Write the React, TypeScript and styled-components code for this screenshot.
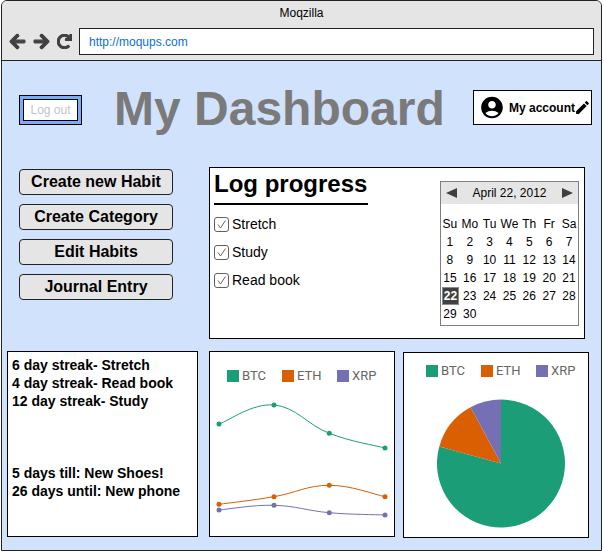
import React from 'react';
import styled, { createGlobalStyle } from 'styled-components';
import { FaArrowLeft, FaArrowRight, FaRedo } from 'react-icons/fa';
import { MdAccountCircle, MdEdit } from 'react-icons/md';

const GlobalStyle = createGlobalStyle`
  html, body {
    margin: 0;
    padding: 0;
    background: #ffffff;
    font-family: "Liberation Sans", Arial, sans-serif;
  }
`;

const BrowserWindow = styled.div`
  box-sizing: border-box;
  width: 601px;
  height: 551px;
  margin-left: 1px;
  border: 1px solid #222222;
  border-radius: 6px 6px 0 0;
  overflow: hidden;
  background: #d1e2fc;
`;

const BrowserHeader = styled.header`
  box-sizing: border-box;
  height: 60px;
  background: #e5e5e5;
  border-bottom: 1px solid #222222;
`;

const WindowTitle = styled.div`
  height: 27px;
  line-height: 24px;
  text-align: center;
  font-size: 12px;
  color: #000000;
`;

const NavRow = styled.div`
  display: flex;
  align-items: center;
  padding: 0 7px 0 7px;
`;

const NavIcons = styled.div`
  display: flex;
  align-items: center;
  width: 70px;
  color: #404040;
  gap: 7px;

  svg {
    stroke: currentColor;
    stroke-width: 36px;
  }
`;

const UrlBar = styled.div`
  box-sizing: border-box;
  flex: 1;
  height: 27px;
  background: #ffffff;
  border: 1px solid #222222;
  padding-left: 9px;
  line-height: 26px;
  font-size: 12px;
  color: #0b6fe0;
`;

const TopRow = styled.div`
  display: flex;
  align-items: flex-start;
  padding: 29px 9px 0 17px;
`;

const LogOutOuter = styled.div`
  box-sizing: border-box;
  width: 63px;
  height: 30px;
  margin-top: 5px;
  padding: 3px;
  background: #7cacf8;
  border: 1px solid #000000;
`;

const LogOutInner = styled.div`
  box-sizing: border-box;
  height: 22px;
  background: #ffffff;
  border: 1px solid #000000;
  text-align: center;
  line-height: 20px;
  font-size: 12px;
  color: #c4c4c4;
`;

const PageTitle = styled.h1`
  flex: 1;
  height: 35px;
  margin: -11px 0 0 32px;
  font-size: 48px;
  line-height: 60px;
  font-weight: bold;
  color: #7a7a7a;
`;

const AccountButton = styled.div`
  box-sizing: border-box;
  display: flex;
  align-items: center;
  width: 119px;
  height: 35px;
  padding-left: 5px;
  background: #ffffff;
  border: 1px solid #000000;
  font-size: 12px;
  font-weight: bold;
  color: #000000;
  white-space: nowrap;
`;

const AccountName = styled.span`
  margin-left: 4px;
  margin-right: -1px;
`;

const MiddleRow = styled.div`
  display: flex;
  align-items: flex-start;
  gap: 36px;
  padding: 42px 0 0 17px;
`;

const ActionColumn = styled.div`
  display: flex;
  flex-direction: column;
  gap: 9px;
  width: 154px;
  margin-top: 2px;
`;

const ActionButton = styled.button`
  box-sizing: border-box;
  height: 26px;
  padding: 0;
  background: #e5e5e5;
  border: 1px solid #222222;
  border-radius: 4px;
  font-family: inherit;
  font-size: 16px;
  font-weight: bold;
  color: #000000;
`;

const LogPanel = styled.section`
  box-sizing: border-box;
  display: flex;
  justify-content: space-between;
  width: 376px;
  height: 172px;
  padding: 0 5px 0 4px;
  background: #ffffff;
  border: 1px solid #000000;
`;

const LogHeading = styled.h2`
  box-sizing: border-box;
  width: 154px;
  height: 37px;
  margin: 0 0 11px;
  border-bottom: 2px solid #000000;
  font-size: 24px;
  line-height: 32px;
  font-weight: bold;
  color: #000000;
  white-space: nowrap;
`;

const HabitRow = styled.label`
  display: flex;
  align-items: center;
  gap: 3px;
  height: 16px;
  margin-bottom: 12px;
  font-size: 14px;
  color: #000000;
`;

const CheckBox = styled.span`
  box-sizing: border-box;
  display: flex;
  align-items: center;
  justify-content: center;
  width: 15px;
  height: 15px;
  background: #ffffff;
  border: 1.5px solid #606060;
  border-radius: 3px;
`;

const Calendar = styled.div`
  box-sizing: border-box;
  width: 139px;
  height: 145px;
  margin-top: 13px;
  background: #ffffff;
  border: 1px solid #7f7f7f;
`;

const CalendarHead = styled.div`
  display: flex;
  align-items: center;
  justify-content: space-between;
  height: 22px;
  padding: 0 5px;
  background: #e5e5e5;
  font-size: 12px;
  color: #000000;
`;

const CalendarArrow = styled.span<{ $dir: 'left' | 'right' }>`
  width: 0;
  height: 0;
  border-top: 5px solid transparent;
  border-bottom: 5px solid transparent;
  ${props => props.$dir === 'left' ? 'border-right: 11px solid #404040;' : 'border-left: 11px solid #404040;'}
`;

const CalendarGrid = styled.div`
  display: grid;
  grid-template-columns: repeat(7, 19.85px);
  grid-auto-rows: 18px;
  padding: 11px 0 0 0;
  margin-left: -1px;
  font-size: 12px;
  color: #000000;
`;

const CalendarCell = styled.div<{ $selected?: boolean }>`
  box-sizing: border-box;
  display: flex;
  align-items: center;
  justify-content: center;
  ${props => props.$selected && `
    background: #404040;
    border: 1px solid #8a8a8a;
    color: #ffffff;
    font-weight: bold;
    margin-left: 2px;
    width: 17px;
  `}
`;

const BottomRow = styled.div`
  display: flex;
  align-items: flex-start;
  padding: 12px 0 0 5px;
`;

const StreakPanel = styled.section`
  box-sizing: border-box;
  width: 191px;
  height: 186px;
  padding: 4px 0 0 4px;
  background: #ffffff;
  border: 1px solid #000000;
`;

const StreakLine = styled.div<{ $gapBefore?: boolean }>`
  height: 18px;
  line-height: 18px;
  font-size: 14px;
  font-weight: bold;
  color: #000000;
  white-space: nowrap;
  ${props => props.$gapBefore && 'margin-top: 54px;'}
`;

const ChartPanel = styled.section<{ $left: number; $top?: number; $legendTop: number }>`
  box-sizing: border-box;
  width: 186px;
  height: 186px;
  margin-left: ${props => props.$left}px;
  margin-top: ${props => props.$top || 0}px;
  padding-top: ${props => props.$legendTop}px;
  background: #ffffff;
  border: 1px solid #000000;
`;

const Legend = styled.div<{ $left: number }>`
  display: flex;
  height: 12px;
  padding-left: ${props => props.$left}px;
  font-family: Roboto, "Liberation Sans", sans-serif;
  font-size: 13px;
  color: #666666;
`;

const LegendItem = styled.div`
  display: flex;
  flex-shrink: 0;
  align-items: center;
  width: 55px;
  gap: 3px;
  line-height: 12px;
`;

const LegendSwatch = styled.span<{ $color: string }>`
  width: 12px;
  height: 12px;
  background: ${props => props.$color};
`;

const ChartSvg = styled.svg`
  display: block;
`;

const SERIES = [
  { name: 'BTC', color: '#1b9e77' },
  { name: 'ETH', color: '#d95f02' },
  { name: 'XRP', color: '#7570b3' },
];

// points are in panel coordinates, below the legend
const LINES = [
  { color: '#1b9e77', points: [[9, 72], [64, 53], [119.3, 81.3], [175, 96]] },
  { color: '#d95f02', points: [[9, 152.3], [64, 144.7], [119.3, 133.3], [175, 144.7]] },
  { color: '#7570b3', points: [[9, 158], [64, 153.3], [119.3, 160.7], [175, 163]] },
];

const smoothPath = (pts: number[][]) => {
  let d = `M${pts[0][0]} ${pts[0][1]}`;
  for (let i = 0; i < pts.length - 1; i++) {
    const prev = pts[i - 1] || pts[i];
    const a = pts[i];
    const b = pts[i + 1];
    const next = pts[i + 2] || b;
    const c1x = a[0] + (b[0] - prev[0]) * 0.2;
    const c1y = a[1] + (b[1] - prev[1]) * 0.2;
    const c2x = b[0] - (next[0] - a[0]) * 0.2;
    const c2y = b[1] - (next[1] - a[1]) * 0.2;
    d += ` C${c1x} ${c1y} ${c2x} ${c2y} ${b[0]} ${b[1]}`;
  }
  return d;
};

const DAYS = ['Su', 'Mo', 'Tu', 'We', 'Th', 'Fr', 'Sa'];
const DATES = Array.from({ length: 30 }, (_, i) => i + 1);
const HABITS = ['Stretch', 'Study', 'Read book'];

function ChartLegend({ left }: { left: number }) {
  return (
    <Legend $left={left}>
      {SERIES.map(s => (
        <LegendItem key={s.name}>
          <LegendSwatch $color={s.color} />
          {s.name}
        </LegendItem>
      ))}
    </Legend>
  );
}

function App() {
  return (
    <BrowserWindow>
      <GlobalStyle />
      <BrowserHeader>
        <WindowTitle>Moqzilla</WindowTitle>
        <NavRow>
          <NavIcons>
            <FaArrowLeft size={17} />
            <FaArrowRight size={17} />
            <FaRedo size={15} />
          </NavIcons>
          <UrlBar>http://moqups.com</UrlBar>
        </NavRow>
      </BrowserHeader>

      <TopRow>
        <LogOutOuter>
          <LogOutInner>Log out</LogOutInner>
        </LogOutOuter>
        <PageTitle>My Dashboard</PageTitle>
        <AccountButton>
          <MdAccountCircle size={29} />
          <AccountName>My account</AccountName>
          <MdEdit size={19} />
        </AccountButton>
      </TopRow>

      <MiddleRow>
        <ActionColumn>
          <ActionButton>Create new Habit</ActionButton>
          <ActionButton>Create Category</ActionButton>
          <ActionButton>Edit Habits</ActionButton>
          <ActionButton>Journal Entry</ActionButton>
        </ActionColumn>
        <LogPanel>
          <div>
            <LogHeading>Log progress</LogHeading>
            {HABITS.map(h => (
              <HabitRow key={h}>
                <CheckBox>
                  <svg width="11" height="11" viewBox="0 0 11 11">
                    <path d="M2 5.5 L4.5 9 L9.5 1.5" fill="none" stroke="#666666" strokeWidth="1" />
                  </svg>
                </CheckBox>
                {h}
              </HabitRow>
            ))}
          </div>
          <Calendar>
            <CalendarHead>
              <CalendarArrow $dir="left" />
              April 22, 2012
              <CalendarArrow $dir="right" />
            </CalendarHead>
            <CalendarGrid>
              {DAYS.map(d => <CalendarCell key={d}>{d}</CalendarCell>)}
              {DATES.map(d => <CalendarCell key={d} $selected={d === 22}>{d}</CalendarCell>)}
            </CalendarGrid>
          </Calendar>
        </LogPanel>
      </MiddleRow>

      <BottomRow>
        <StreakPanel>
          <StreakLine>6 day streak- Stretch</StreakLine>
          <StreakLine>4 day streak- Read book</StreakLine>
          <StreakLine>12 day streak- Study</StreakLine>
          <StreakLine $gapBefore>5 days till: New Shoes!</StreakLine>
          <StreakLine>26 days until: New phone</StreakLine>
        </StreakPanel>

        <ChartPanel $left={11} $legendTop={18}>
          <ChartLegend left={17} />
          <ChartSvg width="184" height="154" viewBox="0 30 184 154">
            {LINES.map(line => (
              <g key={line.color}>
                <path d={smoothPath(line.points)} fill="none" stroke={line.color} strokeWidth="1" />
                {line.points.map(p => (
                  <circle key={p[0]} cx={p[0]} cy={p[1]} r="2.5" fill={line.color} />
                ))}
              </g>
            ))}
          </ChartSvg>
        </ChartPanel>

        <ChartPanel $left={8} $top={1} $legendTop={12}>
          <ChartLegend left={22} />
          <ChartSvg width="184" height="160" viewBox="0 24 184 160">
            <path d="M97 110.5 L97 46.5 A64 64 0 1 1 35.3 93.4 Z" fill="#1b9e77" />
            <path d="M97 110.5 L35.3 93.4 A64 64 0 0 1 66.6 54.2 Z" fill="#d95f02" />
            <path d="M97 110.5 L66.6 54.2 A64 64 0 0 1 97 46.5 Z" fill="#7570b3" />
          </ChartSvg>
        </ChartPanel>
      </BottomRow>
    </BrowserWindow>
  );
}

export default App;
